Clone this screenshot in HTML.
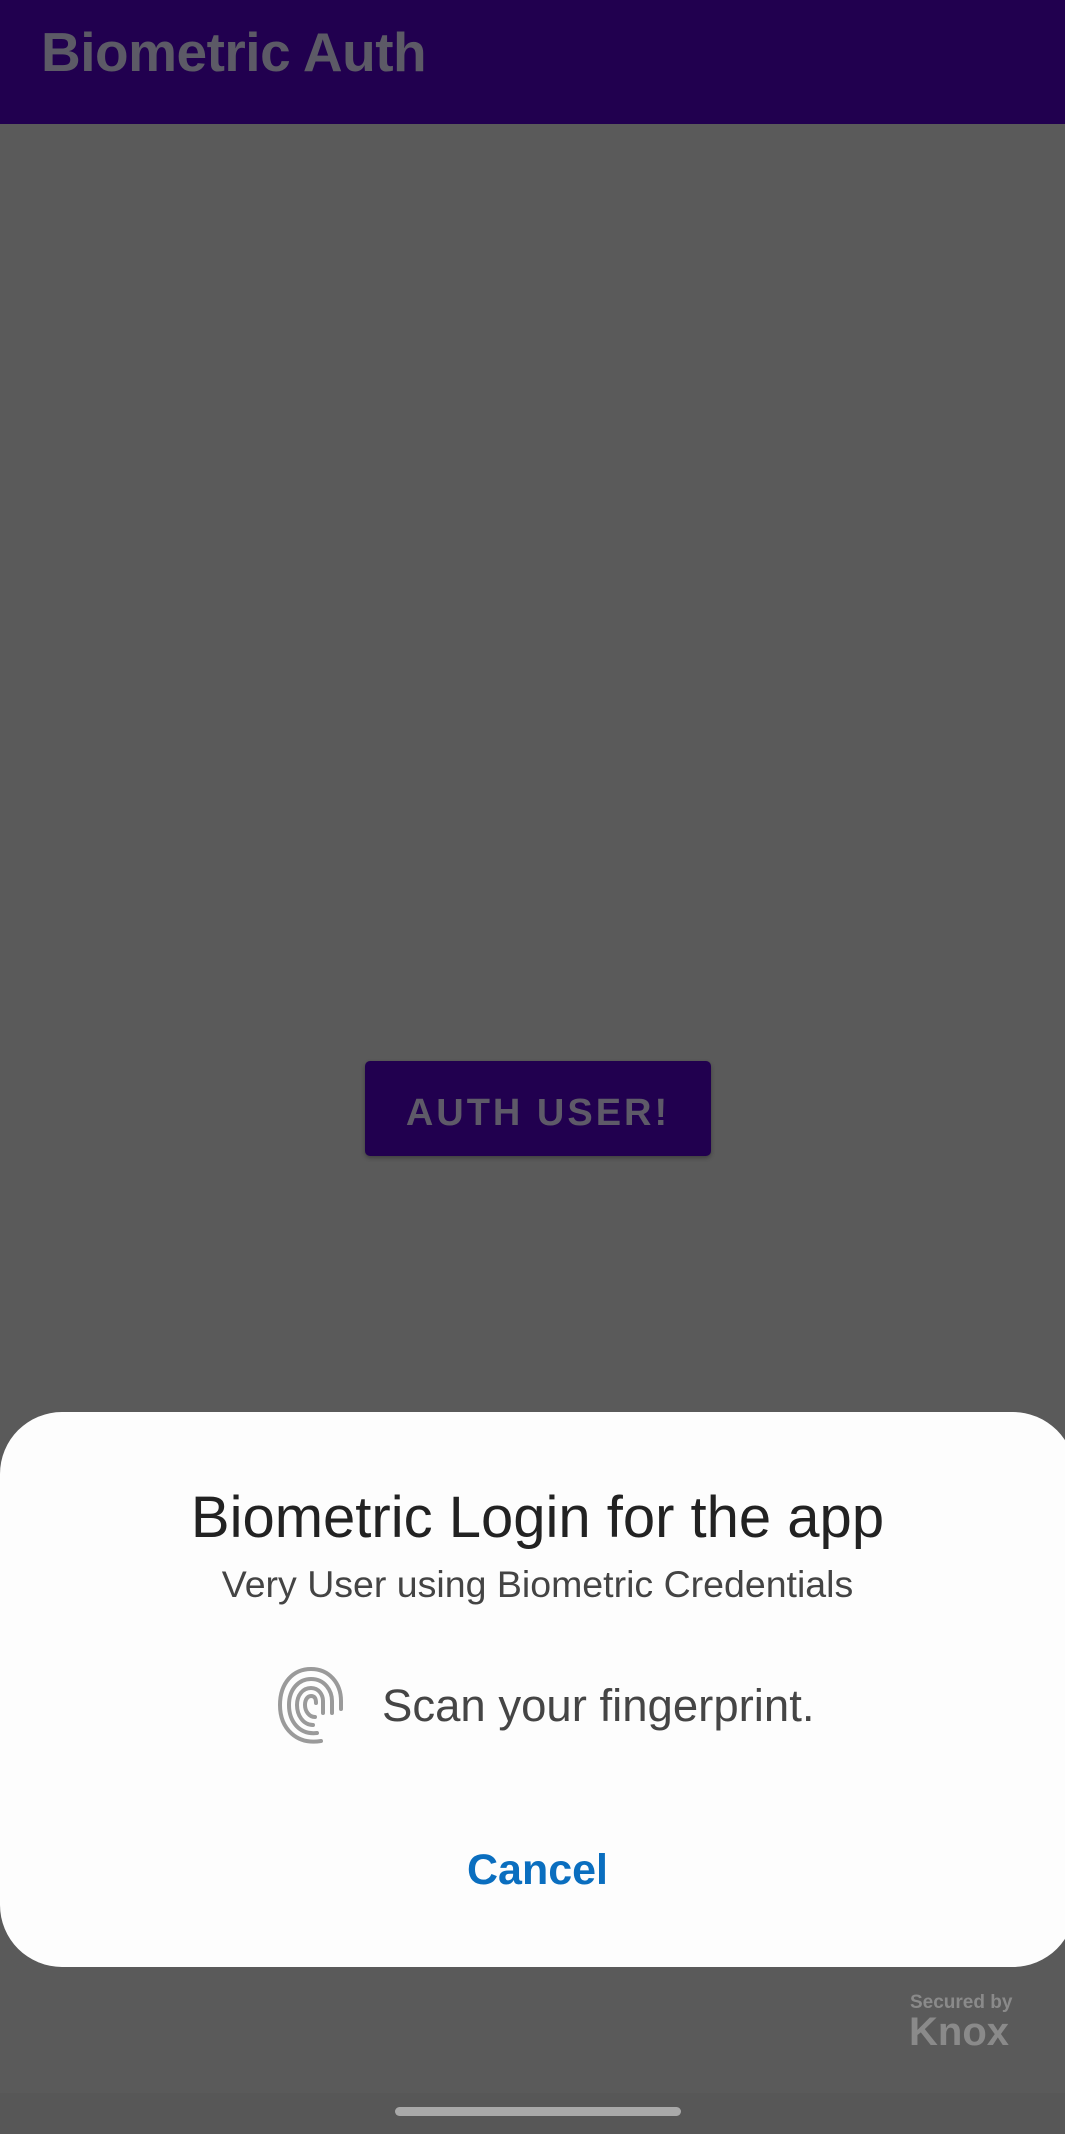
<!DOCTYPE html>
<html><head><style>
body{margin:0;width:1065px;height:2134px;background:#5a5a5a;position:relative;overflow:hidden;font-family:"Liberation Sans",sans-serif}
.hdr{position:absolute;left:0;top:0;width:1065px;height:124px;background:#21004f}
.hdr span{position:absolute;left:41px;top:20px;font-size:55px;font-weight:bold;color:#5c5a66;letter-spacing:-0.5px}
.btn{position:absolute;left:365px;top:1061px;width:346px;height:95px;background:#21004f;border-radius:5px;box-shadow:0 2px 4px rgba(0,0,0,.3);color:#5e5a68;font-size:38px;font-weight:bold;letter-spacing:3px;text-align:center;line-height:105px}
.dlg{position:absolute;left:0;top:1412px;width:1075px;height:555px;background:#fdfdfd;border-radius:62px}
.t1{position:absolute;top:1484px;width:1075px;text-align:center;font-size:58px;color:#222}
.t2{position:absolute;top:1563px;width:1075px;text-align:center;font-size:37.5px;color:#444}
.t3{position:absolute;left:382px;top:1680px;font-size:45.5px;color:#454545}
.cancel{position:absolute;top:1846px;width:1075px;text-align:center;font-size:43px;font-weight:bold;color:#0a6ebf}
.bot{position:absolute;left:0;top:2093px;width:1065px;height:41px;background:#575757}
.pill{position:absolute;left:395px;top:2107px;width:286px;height:9px;border-radius:5px;background:#a9a9a9}
.knox{position:absolute;left:910px;top:1992px;color:#8a8a8a}
</style></head><body>
<div class="hdr"><span>Biometric Auth</span></div>
<div class="btn">AUTH USER!</div>
<div class="dlg"></div>
<div class="t1">Biometric Login for the app</div>
<div class="t2">Very User using Biometric Credentials</div>
<svg style="position:absolute;left:277px;top:1665px" width="68" height="80" viewBox="0 0 68 80" fill="none" stroke="#9a9a9a" stroke-width="4" stroke-linecap="round">
<path d="M44 76 C20 80 3 64 3 40 C3 18 16 4 34 4 C52 4 64 18 64 36 L64 44"/>
<path d="M40 68 C22 70 12 56 12 40 C12 24 22 14 34 14 C48 14 55 26 55 36 L55 48"/>
<path d="M36 60 C26 60 20 50 20 40 C20 30 26 23 34 23 C42 23 46 30 46 36 L46 48"/>
<path d="M38 52 C32 52 28 46 28 40 C28 34 31 31 34 31 C38 31 39 34 39 38"/>
</svg>
<div class="t3">Scan your fingerprint.</div>
<div class="cancel">Cancel</div>
<div class="knox"><div style="font-size:19px;font-weight:bold">Secured by</div><div style="font-size:40px;font-weight:bold;line-height:36px;margin-left:-1px">Knox</div></div>
<div class="bot"></div>
<div class="pill"></div>
</body></html>
